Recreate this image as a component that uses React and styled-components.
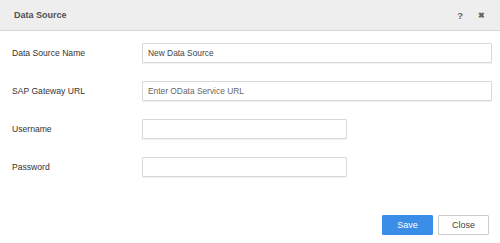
import styled, { createGlobalStyle } from "styled-components"

const GlobalStyle = createGlobalStyle`
  html, body {
    margin: 0;
    padding: 0;
    background: #fff;
    font-family: "Liberation Sans", Arial, sans-serif;
  }
`

export default function App() {
  const fields = [
    { label: "Data Source Name", value: "New Data Source", wide: true },
    { label: "SAP Gateway URL", placeholder: "Enter OData Service URL", wide: true },
    { label: "Username", value: "" },
    { label: "Password", value: "", type: "password" },
  ]

  return (
    <Dialog>
      <GlobalStyle />
      <Header>
        <Title>Data Source</Title>
        <HeaderIcons>
          <IconButton>?</IconButton>
          <IconButton $close>✖</IconButton>
        </HeaderIcons>
      </Header>
      <Form>
        {fields.map((f) => (
          <Row key={f.label}>
            <Label>{f.label}</Label>
            <Input
              $wide={f.wide}
              type={f.type || "text"}
              defaultValue={f.value}
              placeholder={f.placeholder}
            />
          </Row>
        ))}
      </Form>
      <Footer>
        <Button $primary>Save</Button>
        <Button>Close</Button>
      </Footer>
    </Dialog>
  )
}

const Dialog = styled.div`
  width: 500px;
  height: 243px;
  display: flex;
  flex-direction: column;
  background: #fff;
`

const Header = styled.div`
  height: 31px;
  flex-shrink: 0;
  box-sizing: border-box;
  background: #eeeeee;
  border-bottom: 1px solid #d6d6d6;
  display: flex;
  align-items: center;
  justify-content: space-between;
  padding: 0 15px 0 14px;
`

const Title = styled.h1`
  margin: 0;
  font-size: 9px;
  font-weight: 700;
  color: #505050;
`

const HeaderIcons = styled.div`
  display: flex;
  align-items: center;
  gap: 15px;
`

const IconButton = styled.span`
  font-size: ${(p) => (p.$close ? "7.5px" : "9.5px")};
  font-weight: 700;
  color: #666;
  cursor: pointer;
`

const Form = styled.div`
  display: flex;
  flex-direction: column;
  gap: 18px;
  padding: 12px 8px 0 12px;
`

const Row = styled.div`
  display: flex;
  align-items: center;
`

const Label = styled.label`
  width: 130px;
  font-size: 8.6px;
  color: #333;
`

const Input = styled.input`
  box-sizing: border-box;
  width: ${(p) => (p.$wide ? "350px" : "205px")};
  height: 20px;
  border: 1px solid #d8d8d8;
  border-radius: 1px;
  box-shadow: 0 1px 1px rgba(0, 0, 0, 0.06);
  padding: 0 5px;
  font-family: "Liberation Sans", Arial, sans-serif;
  font-size: 8.4px;
  color: #444;
  outline: none;

  &::placeholder {
    color: #666;
  }
`

const Footer = styled.div`
  margin-top: auto;
  display: flex;
  justify-content: flex-end;
  gap: 5px;
  padding: 0 11px 8px 0;
`

const Button = styled.button`
  box-sizing: border-box;
  width: 51px;
  height: 20px;
  border-radius: 1px;
  font-family: "Liberation Sans", Arial, sans-serif;
  font-size: 9px;
  cursor: pointer;
  border: 1px solid ${(p) => (p.$primary ? "#3b8ee8" : "#cccccc")};
  background: ${(p) => (p.$primary ? "#3b8ee8" : "#ffffff")};
  color: ${(p) => (p.$primary ? "#ffffff" : "#444")};
`
